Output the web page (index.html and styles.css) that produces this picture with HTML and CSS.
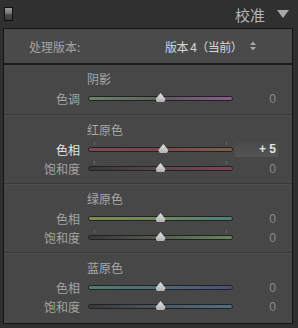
FILE: index.html
```html
<!DOCTYPE html>
<html lang="zh-CN">
<head>
    <meta charset="UTF-8">
    <meta name="viewport" content="width=device-width, initial-scale=1.0">
    <title>校准</title>
    <link rel="stylesheet" href="styles.css">
</head>
<body>
    <div class="header">
        <span class="toggle"></span>
        <span class="title">校准</span>
        <span class="arrow"></span>
    </div>
    <div class="panel">
        <div class="process">
            <span class="process-label">处理版本:</span>
            <span class="process-value">版本 4（当前）</span>
            <svg class="updown" width="8" height="10" viewBox="0 0 8 10">
                <path d="M4 0.5 L7 4 L1 4 Z M1 6 L7 6 L4 9.5 Z" fill="#a8a8a8"/>
            </svg>
        </div>

        <div class="section first">
            <div class="heading">阴影</div>
            <div class="row">
                <span class="label">色调</span>
                <div class="track tint"><span class="thumb"></span></div>
                <span class="value">0</span>
            </div>
        </div>

        <div class="section">
            <div class="heading">红原色</div>
            <div class="row">
                <span class="label active">色相</span>
                <div class="track red-hue ticks"><span class="thumb" style="left: 52%"></span></div>
                <span class="value edit">+ 5</span>
            </div>
            <div class="row">
                <span class="label">饱和度</span>
                <div class="track red-sat ticks"><span class="thumb"></span></div>
                <span class="value">0</span>
            </div>
        </div>

        <div class="section">
            <div class="heading">绿原色</div>
            <div class="row">
                <span class="label">色相</span>
                <div class="track green-hue"><span class="thumb"></span></div>
                <span class="value">0</span>
            </div>
            <div class="row">
                <span class="label">饱和度</span>
                <div class="track green-sat ticks"><span class="thumb"></span></div>
                <span class="value">0</span>
            </div>
        </div>

        <div class="section">
            <div class="heading">蓝原色</div>
            <div class="row">
                <span class="label">色相</span>
                <div class="track blue-hue"><span class="thumb"></span></div>
                <span class="value">0</span>
            </div>
            <div class="row">
                <span class="label">饱和度</span>
                <div class="track blue-sat"><span class="thumb"></span></div>
                <span class="value">0</span>
            </div>
        </div>
    </div>
</body>
</html>
```

FILE: styles.css
```css
body {
    margin: 0;
    width: 298px;
    height: 328px;
    background-color: #2f2f2f;
    font-family: "Noto Sans CJK SC", "Liberation Sans", sans-serif;
    font-size: 12px;
    color: #a8a8a8;
    overflow: hidden;
}

.header {
    height: 28px;
    display: flex;
    align-items: center;
    padding: 0 9px 0 4px;
    background-color: #303030;
}

.toggle {
    width: 7px;
    height: 12px;
    border: 1px solid #111;
    background: linear-gradient(#9a9a9a, #777 45%, #4a4a4a 55%, #3a3a3a);
}

.title {
    margin-left: auto;
    font-size: 15px;
    color: #b6b6b6;
    margin-right: 12px;
}

.arrow {
    width: 0;
    height: 0;
    border-left: 6px solid transparent;
    border-right: 6px solid transparent;
    border-top: 8px solid #a8a8a8;
}

.panel {
    margin: 0 5px 0 3px;
    height: 294px;
    border: 1px solid #151515;
    background-color: #474747;
}

.process {
    height: 34px;
    display: flex;
    align-items: center;
    padding: 0 0 0 25px;
    background-color: #4a4a4a;
    border-bottom: 2px solid #1c1c1c;
}

.process-label {
    color: #a4a4a4;
    width: 136px;
}

.process-value {
    color: #d6d6d6;
    letter-spacing: -0.5px;
}

.updown {
    margin-left: 7px;
}

.section {
    padding: 8px 0 5px;
    border-top: 1px solid #3a3a3a;
    box-shadow: inset 0 1px 0 #4d4d4d;
}

.section.first {
    padding: 7px 0 6px;
    border-top: none;
    box-shadow: none;
}

.heading {
    line-height: 14px;
    margin: 0 0 3px 83px;
    color: #a8a8a8;
}

.row {
    height: 19px;
    display: grid;
    grid-template-columns: 84px 145px 45px;
    align-items: center;
}

.label {
    text-align: right;
    padding-right: 8px;
    color: #a4a4a4;
}

.label.active {
    color: #e6e6e6;
}

.track {
    position: relative;
    height: 3px;
    border: 1px solid #222;
    border-radius: 3px;
}

.ticks::before,
.ticks::after {
    content: "";
    position: absolute;
    top: -6px;
    width: 1px;
    height: 3px;
    background-color: #6a6a6a;
}

.ticks::before {
    left: 5px;
}

.ticks::after {
    right: 5px;
}

.thumb {
    position: absolute;
    left: 50%;
    top: -4px;
    width: 10px;
    height: 9px;
    margin-left: -5px;
    clip-path: polygon(50% 0, 92% 55%, 100% 75%, 85% 100%, 15% 100%, 0 75%, 8% 55%);
    background: linear-gradient(#e4e4e4, #b0b0b0);
}

.tint {
    background: linear-gradient(to right, #66886a, #5e665e 45%, #645a64 55%, #8e5a92);
}

.red-hue {
    background: linear-gradient(to right, #7a4a56, #7a464c 50%, #7c6048);
}

.red-sat {
    background: linear-gradient(to right, #383838, #54464a 45%, #804458);
}

.green-hue {
    background: linear-gradient(to right, #7e8a4e, #6e885c 50%, #4c807e);
}

.green-sat {
    background: linear-gradient(to right, #383838, #525a50 45%, #66885c);
}

.blue-hue {
    background: linear-gradient(to right, #4c8070, #4c6a78 50%, #4c4c80);
}

.blue-sat {
    background: linear-gradient(to right, #383838, #485660 45%, #4c7088);
}

.value {
    margin-left: 2px;
    text-align: right;
    font-family: "Liberation Sans", sans-serif;
    font-size: 12px;
    color: #8a8a8a;
    padding-right: 2px;
}

.value.edit {
    color: #e4e4e4;
    font-weight: bold;
    line-height: 15px;
    background: linear-gradient(#4a4a4a, #545454);
}
```
